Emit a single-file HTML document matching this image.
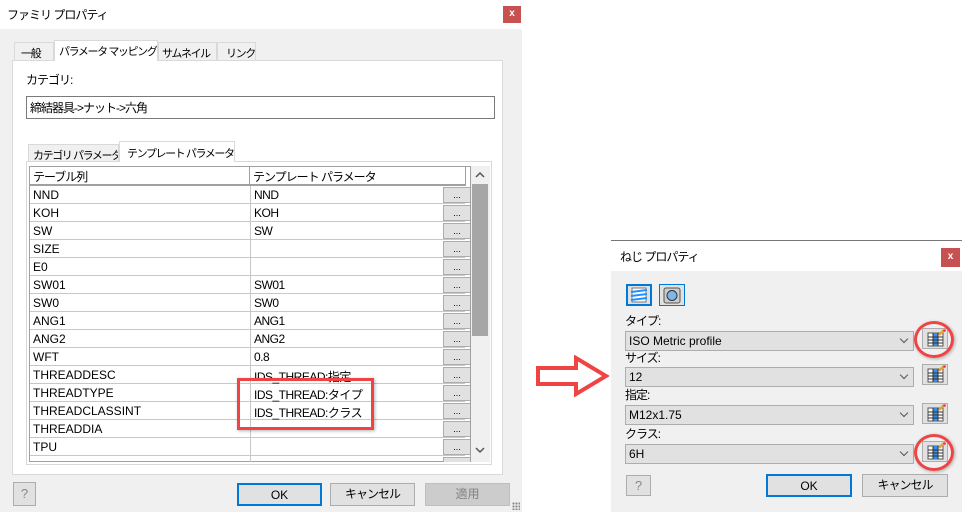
<!DOCTYPE html>
<html><head><meta charset="utf-8"><style>
*{box-sizing:border-box;margin:0;padding:0}
body{width:962px;height:512px;position:relative;background:#fff;font-family:"Liberation Sans","Noto Sans CJK JP",sans-serif;font-size:12px;color:#000;overflow:hidden}
.a{position:absolute;white-space:nowrap}
.j{letter-spacing:-1px}
.btn{position:absolute;background:#e1e1e1;border:1px solid #adadad;text-align:center;line-height:20px;white-space:nowrap}
.row{position:absolute;left:30px;width:435px;height:18px;border-bottom:1px solid #c8c8c8;white-space:nowrap}
.row span{position:absolute;top:2px;left:3px}
.row b{font-weight:normal;position:absolute;top:2px;left:224px;letter-spacing:-0.5px}
.dd{position:absolute;width:28px;height:16px;background:#e1e1e1;border:1px solid #adadad;font-size:9px;text-align:center;line-height:14px}
.cb{position:absolute;left:625px;width:289px;height:20px;background:#e1e1e1;border:1px solid #adadad;padding-left:3px;line-height:18px}
.cb i{position:absolute;right:6px;top:4px;width:6px;height:6px;border-right:1px solid #555;border-bottom:1px solid #555;transform:rotate(45deg)}
.eb{position:absolute;left:922px;width:26px;height:21px;background:#e1e1e1;border:1px solid #adadad}
.lab{position:absolute;left:625px;letter-spacing:-1px}
.tab{font-size:11px;letter-spacing:-1.4px;overflow:hidden}
</style></head><body>
<div class="a" style="left:0;top:0;width:522px;height:512px;background:#f0f0f0"></div>
<div class="a" style="left:0;top:0;width:522px;height:29px;background:#fff"></div>
<div class="a j" style="left:7px;top:6px">ファミリ プロパティ</div>
<div class="a" style="left:503px;top:6px;width:18px;height:17px;background:#c75050;color:#fff;font-weight:bold;font-size:10px;text-align:center;line-height:16px">x</div>
<div class="a tab" style="left:14px;top:42px;width:40px;height:19px;background:#f0f0f0;border:1px solid #d9d9d9;padding:2px 0 0 6px">一般</div>
<div class="a tab" style="left:54px;top:40px;width:104px;height:21px;background:#fff;border:1px solid #d9d9d9;border-bottom:none;padding:2px 0 0 4px">パラメータ マッピング</div>
<div class="a tab" style="left:158px;top:42px;width:59px;height:19px;background:#f0f0f0;border:1px solid #d9d9d9;padding:2px 0 0 3px">サムネイル</div>
<div class="a tab" style="left:217px;top:42px;width:39px;height:19px;background:#f0f0f0;border:1px solid #d9d9d9;padding:2px 0 0 8px">リンク</div>
<div class="a" style="left:12px;top:60px;width:491px;height:415px;background:#fff;border:1px solid #d9d9d9"></div>
<div class="a" style="left:55px;top:59px;width:102px;height:3px;background:#fff"></div>
<div class="a j" style="left:26px;top:71px">カテゴリ:</div>
<div class="a j" style="left:26px;top:96px;width:469px;height:23px;border:1px solid #7a7a7a;padding:2px 0 0 3px">締結器具->ナット->六角</div>
<div class="a tab" style="left:28px;top:144px;width:91px;height:18px;background:#f0f0f0;border:1px solid #d9d9d9;padding:2px 0 0 4px">カテゴリ パラメータ</div>
<div class="a tab" style="left:119px;top:141px;width:116px;height:21px;background:#fff;border:1px solid #d9d9d9;border-bottom:none;padding:3px 0 0 7px">テンプレート パラメータ</div>
<div class="a" style="left:26px;top:161px;width:466px;height:304px;border:1px solid #d9d9d9;background:#fff"></div>
<div class="a" style="left:120px;top:160px;width:114px;height:3px;background:#fff"></div>
<div class="a" style="left:29px;top:166px;width:442px;height:296px;border:1px solid #a0a0a0;border-right:none;background:#fff"></div>
<div class="a j" style="left:30px;top:167px;width:220px;height:19px;background:#fff;border-right:1px solid #a0a0a0;border-bottom:2px solid #a0a0a0;padding:1px 0 0 3px">テーブル列</div>
<div class="a j" style="left:250px;top:167px;width:216px;height:19px;background:#fff;border-right:1px solid #a0a0a0;border-bottom:2px solid #a0a0a0;padding:1px 0 0 3px">テンプレート パラメータ</div>
<div class="a" style="left:250px;top:186px;width:1px;height:276px;background:#c8c8c8"></div>
<div class="row" style="top:186px"><span>NND</span><b>NND</b></div>
<div class="row" style="top:204px"><span>KOH</span><b>KOH</b></div>
<div class="row" style="top:222px"><span>SW</span><b>SW</b></div>
<div class="row" style="top:240px"><span>SIZE</span></div>
<div class="row" style="top:258px"><span>E0</span></div>
<div class="row" style="top:276px"><span>SW01</span><b>SW01</b></div>
<div class="row" style="top:294px"><span>SW0</span><b>SW0</b></div>
<div class="row" style="top:312px"><span>ANG1</span><b>ANG1</b></div>
<div class="row" style="top:330px"><span>ANG2</span><b>ANG2</b></div>
<div class="row" style="top:348px"><span>WFT</span><b>0.8</b></div>
<div class="row" style="top:366px"><span>THREADDESC</span><b>IDS_THREAD:指定</b></div>
<div class="row" style="top:384px"><span>THREADTYPE</span><b>IDS_THREAD:タイプ</b></div>
<div class="row" style="top:402px"><span>THREADCLASSINT</span><b>IDS_THREAD:クラス</b></div>
<div class="row" style="top:420px"><span>THREADDIA</span></div>
<div class="row" style="top:438px"><span>TPU</span></div>
<div class="row" style="top:456px;height:6px;border-bottom:none"></div>
<div class="a" style="left:442px;top:186px;width:30px;height:276px;overflow:hidden">
<div class="dd" style="left:1px;top:1px">...</div><div class="dd" style="left:1px;top:19px">...</div><div class="dd" style="left:1px;top:37px">...</div><div class="dd" style="left:1px;top:55px">...</div><div class="dd" style="left:1px;top:73px">...</div><div class="dd" style="left:1px;top:91px">...</div><div class="dd" style="left:1px;top:109px">...</div><div class="dd" style="left:1px;top:127px">...</div><div class="dd" style="left:1px;top:145px">...</div><div class="dd" style="left:1px;top:163px">...</div><div class="dd" style="left:1px;top:181px">...</div><div class="dd" style="left:1px;top:199px">...</div><div class="dd" style="left:1px;top:217px">...</div><div class="dd" style="left:1px;top:235px">...</div><div class="dd" style="left:1px;top:253px">...</div><div class="dd" style="left:1px;top:271px"></div>
</div>
<div class="a" style="left:470px;top:166px;width:20px;height:296px;background:#f0f0f0;border-left:1px solid #a0a0a0"></div>
<div class="a" style="left:472px;top:184px;width:16px;height:152px;background:#a6a6a6"></div>
<svg class="a" style="left:475px;top:171px" width="10" height="8"><path d="M1 6 L5 2 L9 6" fill="none" stroke="#555" stroke-width="1.5"/></svg>
<svg class="a" style="left:475px;top:446px" width="10" height="8"><path d="M1 2 L5 6 L9 2" fill="none" stroke="#555" stroke-width="1.5"/></svg>
<div class="a" style="left:237px;top:378px;width:137px;height:52px;border:3px solid #ef4444;box-shadow:1px 1px 3px rgba(0,0,0,.3)"></div>
<div class="btn" style="left:13px;top:482px;width:23px;height:24px;color:#888;font-size:13px;line-height:22px">?</div>
<div class="btn" style="left:237px;top:483px;width:85px;height:23px;border:2px solid #0078d7">OK</div>
<div class="btn j" style="left:330px;top:483px;width:85px;height:23px">キャンセル</div>
<div class="btn" style="left:425px;top:483px;width:85px;height:23px;background:#cccccc;border-color:#bfbfbf;color:#838383">適用</div>
<div class="a" style="left:512px;top:502px;width:8px;height:8px;background:radial-gradient(circle,#888 1px,transparent 1.2px) 0 0/3px 3px"></div>
<svg class="a" style="left:536px;top:355px" width="74" height="42"><path d="M2 13 L40 13 L40 3 L70 21 L40 39 L40 29 L2 29 Z" fill="#fff" stroke="#ef4444" stroke-width="4"/></svg>
<div class="a" style="left:611px;top:240px;width:351px;height:1px;background:#777"></div>
<div class="a" style="left:611px;top:241px;width:351px;height:30px;background:#fff"></div>
<div class="a j" style="left:620px;top:248px">ねじ プロパティ</div>
<div class="a" style="left:941px;top:248px;width:19px;height:19px;background:#c75050;color:#fff;font-weight:bold;font-size:10px;text-align:center;line-height:18px">x</div>
<div class="a" style="left:611px;top:271px;width:351px;height:241px;background:#f0f0f0"></div>
<div class="a" style="left:626px;top:284px;width:26px;height:22px;border:2px solid #0078d7;background:#e1e1e1"><svg width="22" height="18"><rect x="4" y="2" width="14" height="14" fill="#fff" stroke="#777"/><path d="M3 6 L19 4 M3 10 L19 8 M3 14 L19 12" stroke="#1e90ff" stroke-width="2"/></svg></div>
<div class="a" style="left:659px;top:284px;width:26px;height:22px;border:1px solid #0078d7;background:#e1e1e1"><svg width="24" height="20"><rect x="4" y="3" width="16" height="15" rx="2" fill="#ccc" stroke="#555"/><circle cx="12" cy="10.5" r="5" fill="#7fb8e8" stroke="#333"/></svg></div>
<div class="lab" style="top:312px">タイプ:</div>
<div class="cb" style="top:331px">ISO Metric profile<i></i></div>
<div class="lab" style="top:349px">サイズ:</div>
<div class="cb" style="top:367px">12<i></i></div>
<div class="lab" style="top:386px">指定:</div>
<div class="cb" style="top:405px">M12x1.75<i></i></div>
<div class="lab" style="top:425px">クラス:</div>
<div class="cb" style="top:444px">6H<i></i></div>
<svg width="0" height="0" style="position:absolute"><defs><g id="ic"><rect x="5" y="4" width="15" height="13" fill="#fff" stroke="#555"/><rect x="10" y="4" width="5" height="13" fill="#3a8ee6"/><path d="M5 8H20M5 11H20M5 14H20M10 4V17M15 4V17" stroke="#333" stroke-width="1"/><path d="M16 6 L21 1" stroke="#e8a33a" stroke-width="2.5"/><circle cx="21.5" cy="1.5" r="1.3" fill="#e33"/></g></defs></svg>
<div class="eb" style="top:328px"><svg width="24" height="19"><use href="#ic"/></svg></div>
<div class="eb" style="top:364px"><svg width="24" height="19"><use href="#ic"/></svg></div>
<div class="eb" style="top:403px"><svg width="24" height="19"><use href="#ic"/></svg></div>
<div class="eb" style="top:441px"><svg width="24" height="19"><use href="#ic"/></svg></div>
<div class="a" style="left:914px;top:321px;width:40px;height:37px;border:3px solid #ef4444;border-radius:50%;box-shadow:1px 1px 3px rgba(0,0,0,.3)"></div>
<div class="a" style="left:914px;top:434px;width:40px;height:37px;border:3px solid #ef4444;border-radius:50%;box-shadow:1px 1px 3px rgba(0,0,0,.3)"></div>
<div class="btn" style="left:626px;top:475px;width:25px;height:21px;color:#888;font-size:13px;line-height:19px">?</div>
<div class="btn" style="left:766px;top:474px;width:86px;height:23px;border:2px solid #0078d7">OK</div>
<div class="btn j" style="left:862px;top:474px;width:86px;height:23px">キャンセル</div>
</body></html>
